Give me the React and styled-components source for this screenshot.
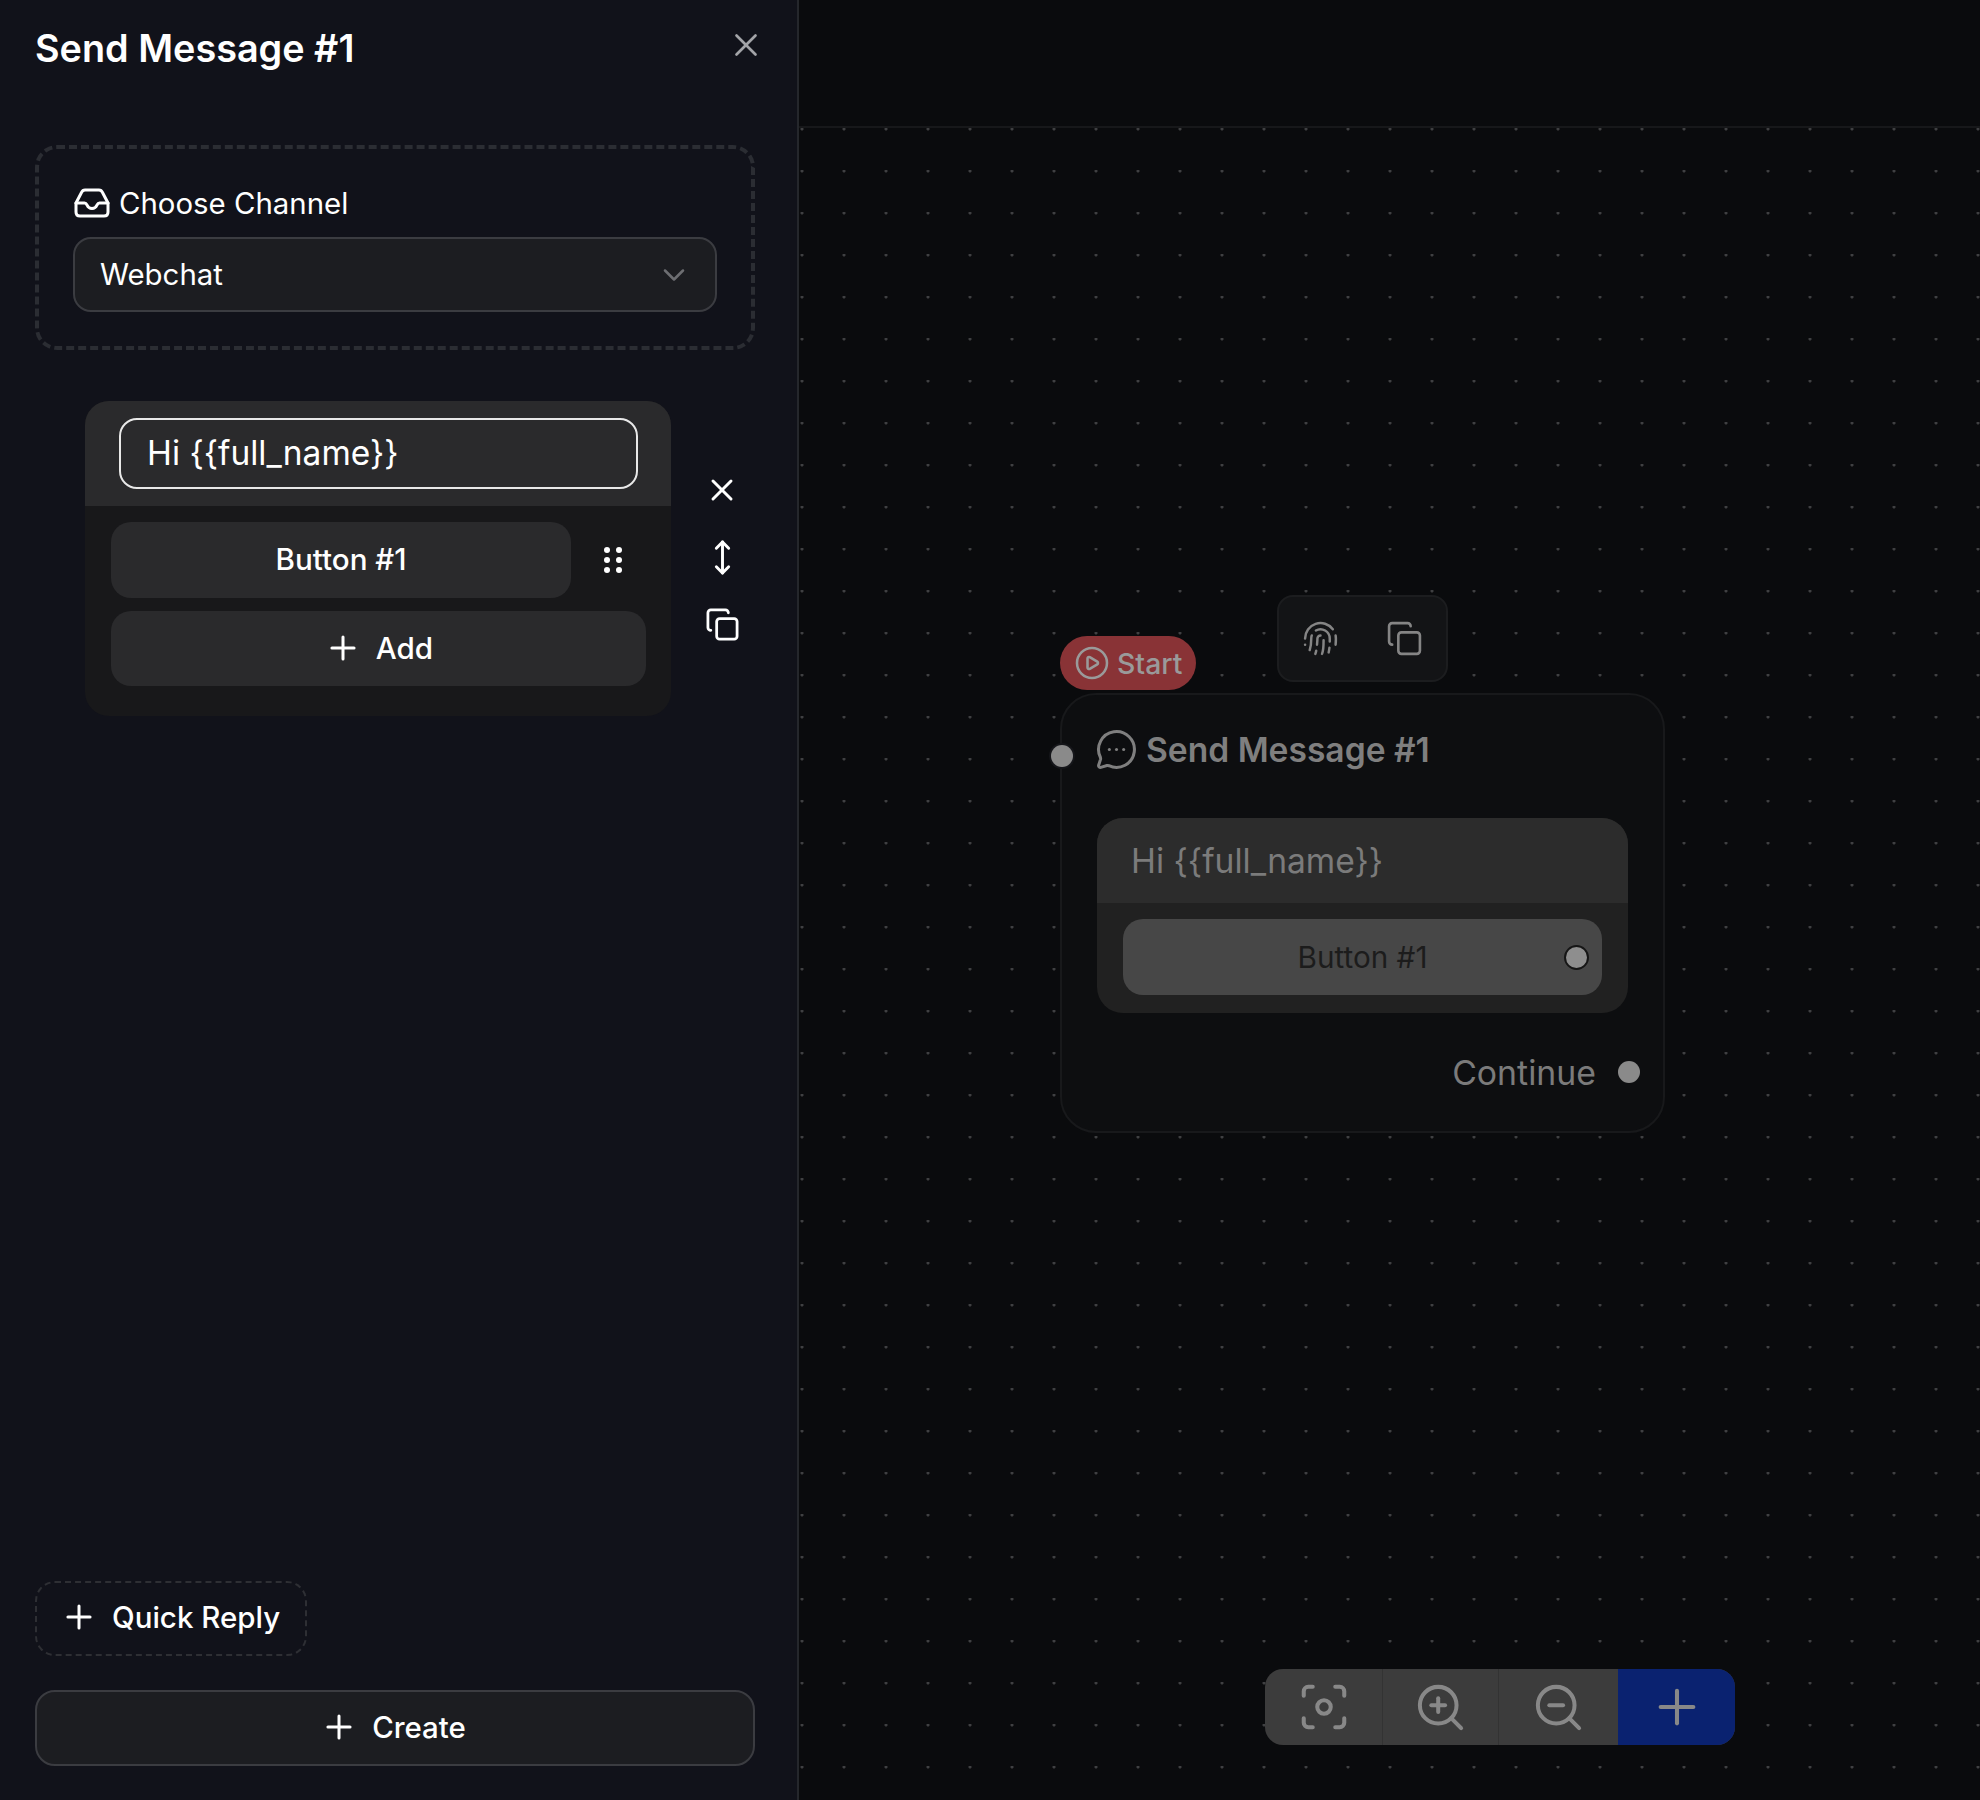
import React from "react";
import styled, { createGlobalStyle } from "styled-components";
import {
  X,
  ChevronDown,
  Plus,
  MoveVertical,
  Copy,
  Fingerprint,
  CirclePlay,
  MessageCircleMore,
  Focus,
  ZoomIn,
  ZoomOut,
} from "lucide-react";

const InboxIcon = () => (
  <svg width="36" height="30" viewBox="0 0 36 30" fill="none" stroke="currentColor" strokeWidth="3" strokeLinecap="round" strokeLinejoin="round">
    <path d="M2 15 L7.5 4.5 Q8.6 2 11 2 H25 Q27.4 2 28.5 4.5 L34 15" />
    <path d="M2 15 V24 Q2 28 6 28 H30 Q34 28 34 24 V15 H25.5 Q24 15 23 17 Q21.5 20.5 18 20.5 Q14.5 20.5 13 17 Q12 15 10.5 15 Z" />
  </svg>
);

const App = () => {
  return (
    <>
      <GlobalStyle />
      <Page>
        <Panel>
          <PanelHead>
            <PanelTitle>Send Message #1</PanelTitle>
            <CloseBtn><X size={38} strokeWidth={1.7} /></CloseBtn>
          </PanelHead>

          <ChannelBox>
            <ChannelLabel>
              <InboxIcon />
              Choose Channel
            </ChannelLabel>
            <SelectBox>
              Webchat
              <ChevronDown size={36} strokeWidth={1.7} color="#6d6e72" />
            </SelectBox>
          </ChannelBox>

          <MessageRow>
            <MessageCard>
              <CardTop>
                <MessageInput>{"Hi {{full_name}}"}</MessageInput>
              </CardTop>
              <CardBottom>
                <ButtonRow>
                  <DarkButton $grow>Button #1</DarkButton>
                  <DragDots>
                    {[0, 1, 2, 3, 4, 5].map((i) => <i key={i} />)}
                  </DragDots>
                </ButtonRow>
                <DarkButton>
                  <Plus size={38} strokeWidth={1.9} />
                  Add
                </DarkButton>
              </CardBottom>
            </MessageCard>
            <SideActions>
              <X size={36} strokeWidth={2} />
              <MoveVertical size={37} strokeWidth={1.9} />
              <Copy size={35} strokeWidth={1.9} />
            </SideActions>
          </MessageRow>

          <PanelFoot>
            <QuickReply>
              <Plus size={38} strokeWidth={1.9} />
              Quick Reply
            </QuickReply>
            <CreateBtn>
              <Plus size={38} strokeWidth={1.9} />
              Create
            </CreateBtn>
          </PanelFoot>
        </Panel>

        <Canvas>
          <CanvasHead />
          <Board>
            <StartPill>
              <CirclePlay size={36} strokeWidth={1.7} />
              Start
            </StartPill>
            <NodeTools>
              <Fingerprint size={37} strokeWidth={1.6} />
              <Copy size={37} strokeWidth={1.7} />
            </NodeTools>
            <FlowNode>
              <InHandle />
              <NodeTitle>
                <MessageCircleMore size={43} strokeWidth={1.7} />
                Send Message #1
              </NodeTitle>
              <NodeCard>
                <NodeCardTop>{"Hi {{full_name}}"}</NodeCardTop>
                <NodeCardBottom>
                  <NodeButton>
                    Button #1
                    <ButtonHandle />
                  </NodeButton>
                </NodeCardBottom>
              </NodeCard>
              <ContinueRow>
                Continue
                <OutHandle />
              </ContinueRow>
            </FlowNode>
            <Controls>
              <ControlBtn $w={118}><Focus size={54} strokeWidth={1.8} /></ControlBtn>
              <ControlBtn $w={116}><ZoomIn size={55} strokeWidth={1.75} /></ControlBtn>
              <ControlBtn $w={119}><ZoomOut size={55} strokeWidth={1.75} /></ControlBtn>
              <ControlBtn $w={117} $blue><Plus size={56} strokeWidth={1.75} /></ControlBtn>
            </Controls>
          </Board>
        </Canvas>
      </Page>
    </>
  );
};

export default App;

const GlobalStyle = createGlobalStyle`
  html, body {
    margin: 0;
    padding: 0;
    background: #0a0b0d;
  }
  * {
    box-sizing: border-box;
  }
`;

const Page = styled.div`
  display: flex;
  width: 1980px;
  height: 1800px;
  font-family: Inter, "Liberation Sans", sans-serif;
  overflow: hidden;
`;

const Panel = styled.aside`
  width: 799px;
  height: 100%;
  flex-shrink: 0;
  display: flex;
  flex-direction: column;
  padding: 0 42px 34px 35px;
  background: #11121a;
  border-right: 2px solid #25272c;
  color: #fff;
`;

const PanelHead = styled.div`
  height: 145px;
  display: flex;
  justify-content: space-between;
  align-items: flex-start;
  padding-top: 26px;
`;

const PanelTitle = styled.h1`
  margin: 0;
  font-size: 37.8px;
  line-height: 44px;
  font-weight: 600;
`;

const CloseBtn = styled.div`
  display: flex;
  margin: 0 -10px 0 0;
  color: #a3a4a8;
`;

const ChannelBox = styled.section`
  height: 205px;
  padding: 37px 34px 0 34px;
  border: 4px dashed #2b2d33;
  border-radius: 22px;
`;

const ChannelLabel = styled.div`
  display: flex;
  align-items: center;
  gap: 9px;
  height: 36px;
  padding: 0 0 2px 1px;
  font-size: 29.4px;
  margin-bottom: 15px;
`;

const SelectBox = styled.div`
  display: flex;
  align-items: center;
  justify-content: space-between;
  height: 75px;
  padding: 0 23px 0 25px;
  font-size: 29.4px;
  background: #1c1d21;
  border: 2.5px solid #3b3c41;
  border-radius: 18px;
`;

const MessageRow = styled.div`
  display: flex;
  align-items: center;
  margin: 51px 0 0 50px;
  gap: 33px;
`;

const MessageCard = styled.div`
  width: 586px;
  height: 315px;
  border-radius: 24px;
  overflow: hidden;
  background: #18181a;
`;

const CardTop = styled.div`
  height: 105px;
  padding: 17px 33px 0 34px;
  background: #2a2a2c;
`;

const MessageInput = styled.div`
  display: flex;
  align-items: center;
  height: 71px;
  padding: 0 26px 2px;
  font-size: 33.5px;
  border: 2.5px solid #e8e8e8;
  border-radius: 18px;
`;

const CardBottom = styled.div`
  display: flex;
  flex-direction: column;
  gap: 13px;
  padding: 16px 25px 0 26px;
`;

const ButtonRow = styled.div`
  display: flex;
  align-items: center;
  height: 76px;
`;

const DarkButton = styled.div`
  display: flex;
  align-items: center;
  justify-content: center;
  gap: 14px;
  height: 75px;
  ${(p) => (p.$grow ? "width: 460px; height: 76px;" : "")}
  font-size: 29.6px;
  font-weight: 500;
  padding-bottom: 2px;
  background: #2a2a2c;
  border-radius: 20px;
`;

const DragDots = styled.div`
  display: grid;
  grid-template-columns: 6px 6px;
  grid-auto-rows: 6px;
  gap: 4px 6px;
  margin-left: 33px;

  i {
    border-radius: 50%;
    background: #fff;
  }
`;

const SideActions = styled.div`
  display: flex;
  flex-direction: column;
  align-items: center;
  gap: 31px;
  margin-top: -4px;
  width: 36px;
`;

const PanelFoot = styled.div`
  display: flex;
  flex-direction: column;
  align-items: flex-start;
  gap: 34px;
  margin-top: auto;
`;

const QuickReply = styled.div`
  display: flex;
  align-items: center;
  gap: 14px;
  height: 75px;
  padding: 0 25px 3px 23px;
  font-size: 29.5px;
  font-weight: 500;
  border: 2px dashed #2e2f34;
  border-radius: 20px;
`;

const CreateBtn = styled.div`
  display: flex;
  align-items: center;
  justify-content: center;
  gap: 14px;
  width: 100%;
  height: 76px;
  padding: 0 4px 2px 0;
  font-size: 29.4px;
  font-weight: 500;
  background: #1c1d21;
  border: 2.5px solid #3b3c41;
  border-radius: 20px;
`;

const Canvas = styled.main`
  flex: 1;
  display: flex;
  flex-direction: column;
  background: #0a0b0d;
`;

const CanvasHead = styled.div`
  height: 128px;
  flex-shrink: 0;
  border-bottom: 2px solid #17181a;
`;

const Board = styled.div`
  flex: 1;
  position: relative;
  background-image: radial-gradient(circle at 3px 1px, #3f4042 1.3px, transparent 1.8px);
  background-size: 42px 42px;
`;

const StartPill = styled.div`
  position: absolute;
  left: 261px;
  top: 508px;
  display: flex;
  align-items: center;
  gap: 7px;
  width: 136px;
  height: 54px;
  padding-left: 14px;
  font-size: 28.4px;
  font-weight: 500;
  color: #9a9a9a;
  background: #893336;
  border-radius: 27px;
`;

const NodeTools = styled.div`
  position: absolute;
  left: 478px;
  top: 467px;
  display: flex;
  align-items: center;
  justify-content: center;
  gap: 47px;
  width: 171px;
  height: 87px;
  color: #858585;
  background: #131416;
  border: 2px solid #1c1d1f;
  border-radius: 16px;
`;

const FlowNode = styled.div`
  position: absolute;
  left: 261px;
  top: 565px;
  width: 605px;
  height: 440px;
  padding: 0 35px;
  background: #0d0e10;
  border: 2px solid #18191b;
  border-radius: 36px;
`;

const Handle = styled.span`
  position: absolute;
  display: block;
  border-radius: 50%;
  background: #8a8a8a;
`;

const InHandle = styled(Handle)`
  left: -11px;
  top: 50px;
  width: 22px;
  height: 22px;
  box-shadow: 0 0 0 2px #15161a;
`;

const ButtonHandle = styled(Handle)`
  right: 13px;
  top: 26px;
  width: 25px;
  height: 25px;
  background: #8e8e8e;
  border: 2px solid #161616;
`;

const OutHandle = styled(Handle)`
  right: -12px;
  top: 14px;
  width: 22px;
  height: 22px;
`;

const NodeTitle = styled.div`
  display: flex;
  align-items: center;
  gap: 8px;
  height: 123px;
  margin-left: -2px;
  padding-bottom: 14px;
  font-size: 33.6px;
  font-weight: 600;
  color: #7f7f7f;
`;

const NodeCard = styled.div`
  width: 531px;
  height: 195px;
  border-radius: 26px;
  overflow: hidden;
  background: #212121;
`;

const NodeCardTop = styled.div`
  display: flex;
  align-items: center;
  height: 85px;
  padding-left: 34px;
  font-size: 33.6px;
  color: #7b7b7b;
  background: #2c2c2c;
`;

const NodeCardBottom = styled.div`
  padding: 16px 26px 0 26px;
`;

const NodeButton = styled.div`
  position: relative;
  display: flex;
  align-items: center;
  justify-content: center;
  height: 76px;
  font-size: 29.7px;
  font-weight: 400;
  color: #1c1c1c;
  background: #474747;
  border-radius: 20px;
`;

const ContinueRow = styled.div`
  position: relative;
  display: flex;
  align-items: center;
  justify-content: flex-end;
  height: 50px;
  margin-top: 34px;
  padding-right: 32px;
  font-size: 33.8px;
  color: #7b7b7b;
`;

const Controls = styled.div`
  position: absolute;
  left: 466px;
  top: 1541px;
  display: flex;
  height: 76px;
  border-radius: 18px;
  overflow: hidden;
  background: #3c3c3c;
  color: #888;
`;

const ControlBtn = styled.div`
  display: flex;
  align-items: center;
  justify-content: center;
  width: ${(p) => p.$w}px;
  background: ${(p) => (p.$blue ? "#0a2270" : "transparent")};
  border-right: ${(p) => (p.$blue || p.$w === 119 ? "none" : "1px solid #333")};
`;
